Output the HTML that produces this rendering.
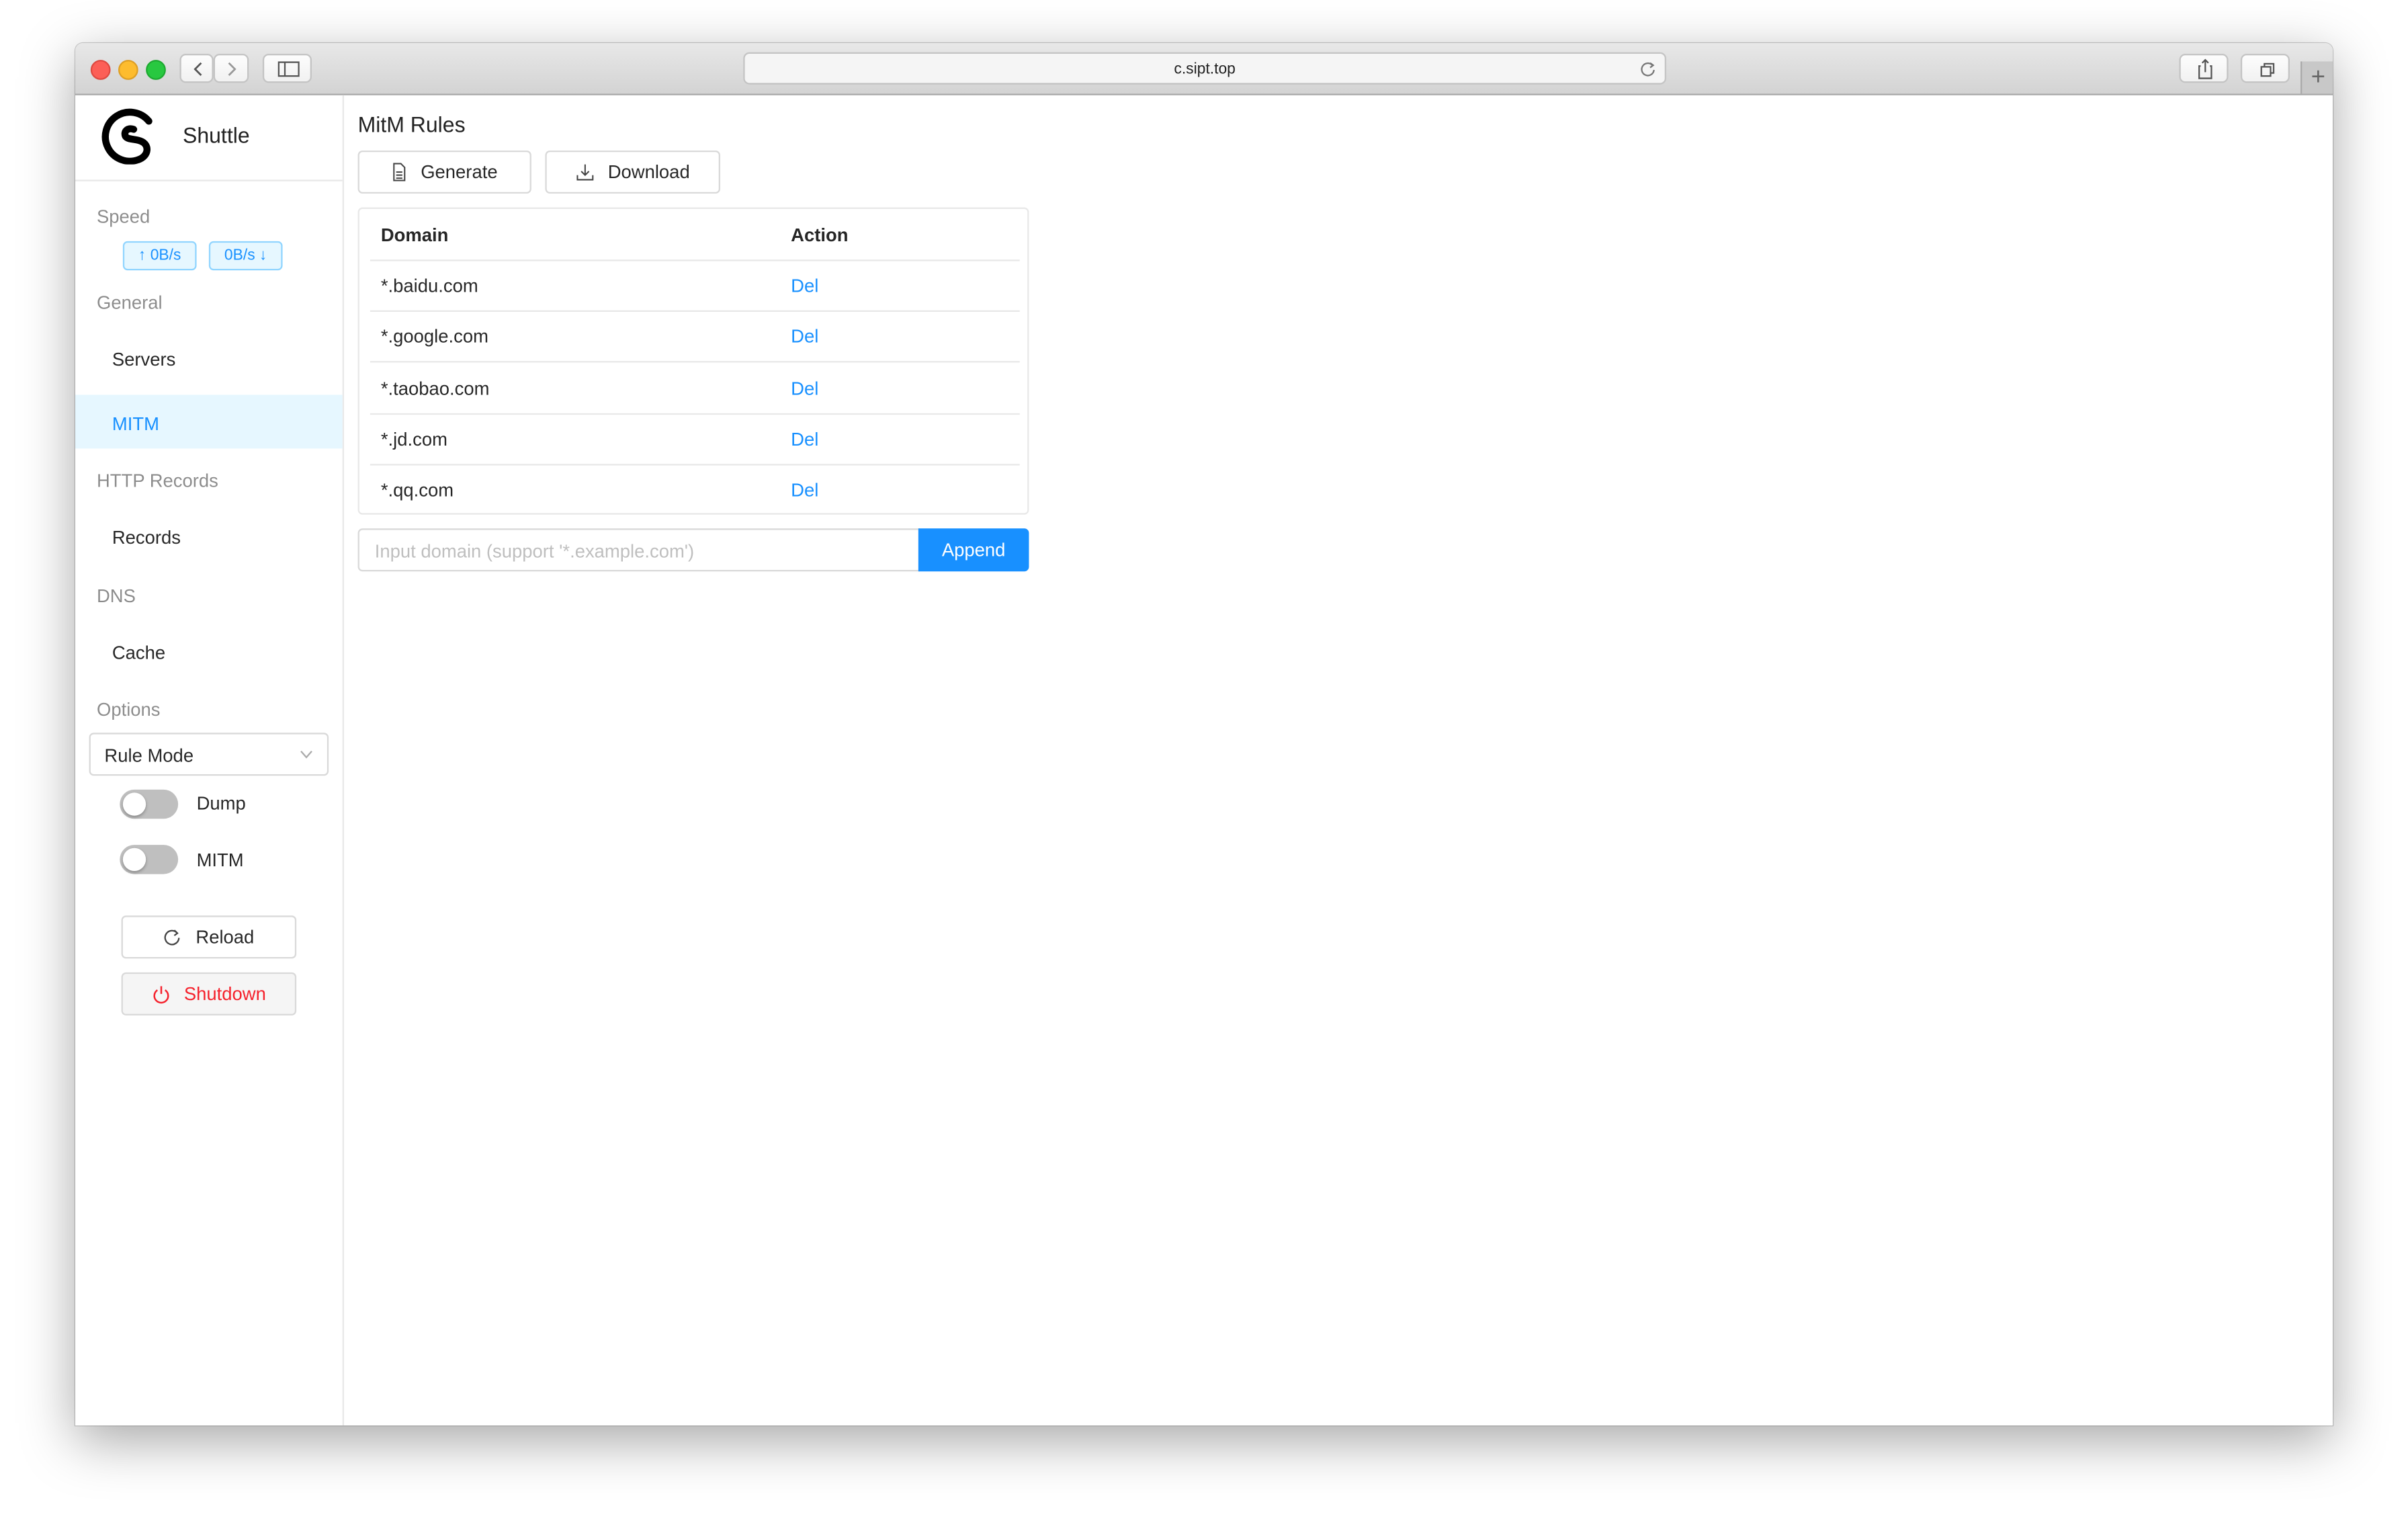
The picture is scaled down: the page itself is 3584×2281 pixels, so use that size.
<!DOCTYPE html>
<html><head><meta charset="utf-8"><style>
html,body{margin:0;padding:0;width:3584px;height:2280px;overflow:hidden;background:#fff;}
#s{position:absolute;left:0;top:0;width:1568px;height:998px;transform:scale(2.285714);transform-origin:0 0;font-family:"Liberation Sans",sans-serif;color:rgba(0,0,0,.85);font-size:12px;}
.a{position:absolute;}
.win{left:49px;top:28px;width:1470px;height:900px;background:#fff;border-radius:5px 5px 0 0;box-shadow:0 10px 35px rgba(0,0,0,.35),0 0 0 .5px rgba(0,0,0,.2);overflow:hidden;}
.tb{left:0;top:0;width:1470px;height:33px;background:linear-gradient(#e8e8e8,#d3d3d3);border-bottom:1px solid #a8a8a8;}
.dot{width:11px;height:11px;border-radius:50%;top:11px;}
.bb{background:linear-gradient(#fdfdfd,#f1f1f1);border:.5px solid #c4c4c4;border-radius:4px;height:19px;top:7px;box-sizing:border-box;}
.lbl{color:rgba(0,0,0,.45);font-size:12px;}
.it{font-size:12px;}
.btn{border:1px solid #d9d9d9;border-radius:3px;background:#fff;box-sizing:border-box;height:28px;display:flex;align-items:center;justify-content:center;gap:9px;font-size:12px;}
.row{left:7px;width:423px;height:33px;border-bottom:1px solid #e8e8e8;}
.row span{position:absolute;top:10px;}
.del{color:#1890ff;}
.sw{width:38px;height:19px;border-radius:10px;background:#bfbfbf;}
.sw::after{content:"";position:absolute;left:2px;top:2px;width:15px;height:15px;border-radius:50%;background:#fff;box-shadow:0 1px 2px rgba(0,0,0,.3);}
</style></head><body><div id="s">
<div class="a win">
 <div class="a tb">
  <div class="a dot" style="left:10px;background:#fc5f57;border:.5px solid #de4a41"></div>
  <div class="a dot" style="left:28px;background:#fdbc2e;border:.5px solid #de9f25"></div>
  <div class="a dot" style="left:46px;background:#28c840;border:.5px solid #1eaa31"></div>
  <div class="a bb" style="left:68px;width:22px"><svg width="22" height="18" style="position:absolute;left:0;top:0"><path d="M13 5 L9 9 L13 13" fill="none" stroke="#555" stroke-width="1.2"/></svg></div>
  <div class="a bb" style="left:90px;width:23px"><svg width="22" height="18" style="position:absolute;left:0;top:0"><path d="M9 5 L13 9 L9 13" fill="none" stroke="#999" stroke-width="1.2"/></svg></div>
  <div class="a bb" style="left:122px;width:32px"><svg width="32" height="18" style="position:absolute;left:0;top:0"><rect x="9.5" y="4.5" width="13" height="9" fill="none" stroke="#555"/><line x1="13.5" y1="4.5" x2="13.5" y2="13.5" stroke="#555"/></svg></div>
  <div class="a bb" style="left:435px;width:601px;height:21px;top:6px;background:#f5f5f5;text-align:center;line-height:22px;font-size:10px;color:#222">c.sipt.top<svg width="12" height="12" style="position:absolute;right:5px;top:4px"><path d="M9 3.5 A4 4 0 1 0 10 6.5" fill="none" stroke="#777" stroke-width="1"/><path d="M7.5 2 L9.5 3.5 L7.5 5" fill="none" stroke="#777" stroke-width="1"/></svg></div>
  <div class="a bb" style="left:1370px;width:32px"><svg width="32" height="18" style="position:absolute;left:0;top:0"><path d="M13 7 H12 V15 H20 V7 H19 M16 3 V11 M14 5 L16 3 L18 5" fill="none" stroke="#555"/></svg></div>
  <div class="a bb" style="left:1410px;width:32px"><svg width="32" height="18" style="position:absolute;left:0;top:0"><rect x="12.5" y="7.5" width="6" height="6" fill="none" stroke="#555"/><path d="M14.5 7.5 V5.5 H20.5 V11.5 H18.5" fill="none" stroke="#555"/></svg></div>
  <div class="a" style="left:1449px;top:12px;width:21px;height:21px;background:#c8c8c8;border-left:1px solid #aaa;color:#666;font-size:16px;text-align:center;line-height:22px">+</div>
 </div>
 <div class="a" style="left:0;top:34px;width:174px;height:866px;border-right:1px solid #e8e8e8;">
  <svg class="a" style="left:14px;top:7px" width="42" height="38" viewBox="0 0 100 100"><path d="M84 26 A42 42 0 1 0 66 92 C84 86 86 66 70 60 C60 56 48 58 44 52 C40 44 48 36 58 40" fill="none" stroke="#000" stroke-width="12" stroke-linecap="round"/></svg>
  <div class="a" style="left:70px;top:18px;font-size:14px;color:#222">Shuttle</div>
  <div class="a" style="left:0;top:55px;width:174px;height:1px;background:#e8e8e8"></div>
  <div class="a lbl" style="left:14px;top:72px">Speed</div>
  <div class="a" style="left:31px;top:95px;width:48px;height:19px;box-sizing:border-box;border:1px solid #91d5ff;background:#e6f7ff;color:#1890ff;border-radius:3px;font-size:10px;text-align:center;line-height:18px">↑ 0B/s</div>
  <div class="a" style="left:87px;top:95px;width:48px;height:19px;box-sizing:border-box;border:1px solid #91d5ff;background:#e6f7ff;color:#1890ff;border-radius:3px;font-size:10px;text-align:center;line-height:18px">0B/s ↓</div>
  <div class="a lbl" style="left:14px;top:128px">General</div>
  <div class="a it" style="left:24px;top:165px">Servers</div>
  <div class="a" style="left:0;top:195px;width:174px;height:35px;background:#e6f7ff"></div>
  <div class="a it" style="left:24px;top:207px;color:#1890ff">MITM</div>
  <div class="a lbl" style="left:14px;top:244px">HTTP Records</div>
  <div class="a it" style="left:24px;top:281px">Records</div>
  <div class="a lbl" style="left:14px;top:319px">DNS</div>
  <div class="a it" style="left:24px;top:356px">Cache</div>
  <div class="a lbl" style="left:14px;top:393px">Options</div>
  <div class="a" style="left:9px;top:415px;width:156px;height:28px;box-sizing:border-box;border:1px solid #d9d9d9;border-radius:3px;"><span class="a" style="left:9px;top:7px">Rule Mode</span><svg class="a" style="right:9px;top:10px" width="9" height="7"><path d="M1 1 L4.5 5 L8 1" fill="none" stroke="#aaa"/></svg></div>
  <div class="a sw" style="left:29px;top:452px"></div>
  <div class="a it" style="left:79px;top:454px">Dump</div>
  <div class="a sw" style="left:29px;top:488px"></div>
  <div class="a it" style="left:79px;top:491px">MITM</div>
  <div class="a btn" style="left:30px;top:534px;width:114px"><svg width="12" height="12"><path d="M9.5 3.5 A4.5 4.5 0 1 0 10.5 6.5" fill="none" stroke="#444" stroke-width="1"/><path d="M7.5 1.5 L9.5 3.5 L7.5 5" fill="none" stroke="#444" stroke-width="1"/></svg>Reload</div>
  <div class="a btn" style="left:30px;top:571px;width:114px;background:#f5f5f5;color:#f5222d"><svg width="12" height="13"><path d="M3.5 3.5 A4.5 4.5 0 1 0 8.5 3.5" fill="none" stroke="#f5222d" stroke-width="1.1"/><line x1="6" y1="1" x2="6" y2="6" stroke="#f5222d" stroke-width="1.1"/></svg>Shutdown</div>
 </div>
 <div class="a" style="left:184px;top:45px;font-size:14px;color:#222">MitM Rules</div>
 <div class="a btn" style="left:184px;top:70px;width:113px"><svg width="10" height="12"><path d="M1.5 .5 H6 L8.5 3 V11.5 H1.5 Z M3 6 H7 M3 8 H7 M3 10 H7" fill="none" stroke="#444" stroke-width=".9"/></svg>Generate</div>
 <div class="a btn" style="left:306px;top:70px;width:114px"><svg width="12" height="12"><path d="M6 1 V8 M3.5 5.5 L6 8 L8.5 5.5 M1 8 V11 H11 V8" fill="none" stroke="#444" stroke-width=".9"/></svg>Download</div>
 <div class="a" style="left:184px;top:107px;width:437px;height:200px;box-sizing:border-box;border:1px solid #e8e8e8;border-radius:3px">
  <div class="a row" style="top:0"><span style="left:7px;font-weight:bold">Domain</span><span style="left:274px;font-weight:bold">Action</span></div>
  <div class="a row" style="top:33px"><span style="left:7px">*.baidu.com</span><span class="del" style="left:274px">Del</span></div>
  <div class="a row" style="top:66px"><span style="left:7px">*.google.com</span><span class="del" style="left:274px">Del</span></div>
  <div class="a row" style="top:99.5px"><span style="left:7px">*.taobao.com</span><span class="del" style="left:274px">Del</span></div>
  <div class="a row" style="top:133px"><span style="left:7px">*.jd.com</span><span class="del" style="left:274px">Del</span></div>
  <div class="a row" style="top:166px;border-bottom:none"><span style="left:7px">*.qq.com</span><span class="del" style="left:274px">Del</span></div>
 </div>
 <div class="a" style="left:184px;top:316px;width:366px;height:28px;box-sizing:border-box;border:1px solid #d9d9d9;border-radius:3px 0 0 3px;color:#bfbfbf;padding:7px 0 0 10px">Input domain (support '*.example.com')</div>
 <div class="a" style="left:549px;top:316px;width:72px;height:28px;background:#1890ff;color:#fff;border-radius:0 3px 3px 0;text-align:center;line-height:28px">Append</div>
</div>
</div></body></html>
